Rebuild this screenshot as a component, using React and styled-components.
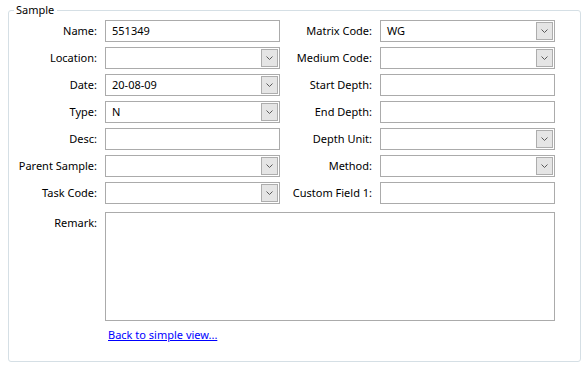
import React from "react";
import styled, { createGlobalStyle } from "styled-components";

const GlobalStyle = createGlobalStyle`
  html, body {
    margin: 0;
    padding: 0;
    background: #ffffff;
  }
  body {
    font-family: "Noto Sans", "Open Sans", sans-serif;
    font-size: 11px;
    color: #000000;
  }
`;

const Page = styled.div`
  width: 588px;
  height: 369px;
  padding: 2px 7px 0 8px;
  box-sizing: border-box;
`;

const GroupBox = styled.fieldset`
  margin: 0;
  padding: 2px 0 0 0;
  width: 573px;
  height: 360px;
  box-sizing: border-box;
  border: 1px solid #d5dfe5;
  border-radius: 3px;
`;

const Legend = styled.legend`
  margin-left: 5px;
  padding: 0 3px 0 2px;
  font-size: 11px;
  line-height: 16px;
  color: #000;
`;

const FormGrid = styled.div`
  display: grid;
  grid-template-columns: 88px 175px 84px 175px;
  column-gap: 8px;
  row-gap: 5px;
  align-items: start;
`;

const Label = styled.label`
  display: flex;
  align-items: center;
  justify-content: flex-end;
  height: 22px;
  white-space: nowrap;
  line-height: 16px;
`;

const TextBox = styled.div`
  box-sizing: border-box;
  height: 22px;
  border: 1px solid #ababab;
  background: #fff;
  padding: 0 6px;
  display: flex;
  align-items: center;
  line-height: 16px;
`;

const ComboBox = styled(TextBox)`
  padding-right: 1px;
  justify-content: space-between;
`;

const DropButton = styled.span`
  box-sizing: border-box;
  width: 17px;
  height: 18px;
  border: 1px solid #adadad;
  background: #e5e5e5;
  display: flex;
  align-items: center;
  justify-content: center;
`;

const RemarkBox = styled.div`
  grid-column: 2 / 5;
  box-sizing: border-box;
  height: 109px;
  margin-top: 3px;
  border: 1px solid #ababab;
  background: #fff;
`;

const RemarkLabel = styled(Label)`
  margin-top: 3px;
`;

const LinkRow = styled.div`
  grid-column: 2 / 5;
  padding: 1px 0 0 3px;
  line-height: 16px;
`;

const BackLink = styled.a`
  color: #0000ff;
  text-decoration: underline;
  cursor: pointer;
`;

const Chevron = () => (
  <svg width="7" height="4" viewBox="0 0 7 4">
    <path d="M0.5 0.5 L3.5 3.5 L6.5 0.5" fill="none" stroke="#5a5a5a" strokeWidth="1" />
  </svg>
);

const Field = ({ label, value, combo }) => (
  <>
    <Label>{label}</Label>
    {combo ? (
      <ComboBox>
        <span>{value}</span>
        <DropButton>
          <Chevron />
        </DropButton>
      </ComboBox>
    ) : (
      <TextBox>{value}</TextBox>
    )}
  </>
);

const rows = [
  [
    { label: "Name:", value: "551349" },
    { label: "Matrix Code:", value: "WG", combo: true },
  ],
  [
    { label: "Location:", combo: true },
    { label: "Medium Code:", combo: true },
  ],
  [
    { label: "Date:", value: "20-08-09", combo: true },
    { label: "Start Depth:" },
  ],
  [
    { label: "Type:", value: "N", combo: true },
    { label: "End Depth:" },
  ],
  [{ label: "Desc:" }, { label: "Depth Unit:", combo: true }],
  [
    { label: "Parent Sample:", combo: true },
    { label: "Method:", combo: true },
  ],
  [{ label: "Task Code:", combo: true }, { label: "Custom Field 1:" }],
];

export default function App() {
  return (
    <Page>
      <GlobalStyle />
      <GroupBox>
        <Legend>Sample</Legend>
        <FormGrid>
          {rows.map((row, i) => (
            <React.Fragment key={i}>
              {row.map((f) => (
                <Field key={f.label} {...f} />
              ))}
            </React.Fragment>
          ))}
          <RemarkLabel>Remark:</RemarkLabel>
          <RemarkBox />
          <div />
          <LinkRow>
            <BackLink>Back to simple view...</BackLink>
          </LinkRow>
        </FormGrid>
      </GroupBox>
    </Page>
  );
}
